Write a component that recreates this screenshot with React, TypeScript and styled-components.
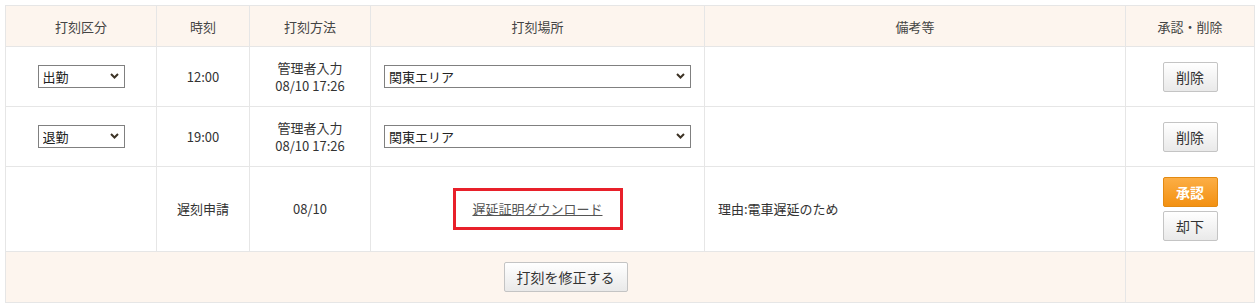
import React from "react"
import styled, { createGlobalStyle } from "styled-components"

const GlobalStyle = createGlobalStyle`
  body {
    margin: 0;
    background: #fff;
    font-family: "Noto Sans CJK JP", "Noto Sans", sans-serif;
    color: #333;
  }
`

type Punch = {
  kind: string
  time: string
  method: string[]
  place: string
}

const punches: Punch[] = [
  { kind: "出勤", time: "12:00", method: ["管理者入力", "08/10 17:26"], place: "関東エリア" },
  { kind: "退勤", time: "19:00", method: ["管理者入力", "08/10 17:26"], place: "関東エリア" },
]

const Chevron: React.FC = () => (
  <S.Chevron width="9" height="6" viewBox="0 0 9 6">
    <path d="M1 1 L4.5 4.5 L8 1" fill="none" stroke="#3d3326" strokeWidth="2" />
  </S.Chevron>
)

const Select: React.FC<{ value: string; width: number }> = ({ value, width }) => (
  <S.SelectWrap $width={width}>
    <S.Select defaultValue={value}>
      <option>{value}</option>
    </S.Select>
    <Chevron />
  </S.SelectWrap>
)

export default function App() {
  return (
    <>
      <GlobalStyle />
      <S.Page>
        <S.Table>
          <colgroup>
            <col style={{ width: 151 }} />
            <col style={{ width: 93 }} />
            <col style={{ width: 121 }} />
            <col style={{ width: 334 }} />
            <col style={{ width: 421 }} />
            <col style={{ width: 129 }} />
          </colgroup>
          <thead>
            <tr>
              <S.Th>打刻区分</S.Th>
              <S.Th>時刻</S.Th>
              <S.Th>打刻方法</S.Th>
              <S.Th>打刻場所</S.Th>
              <S.Th>備考等</S.Th>
              <S.Th>承認・削除</S.Th>
            </tr>
          </thead>
          <tbody>
            {punches.map((p, i) => (
              <S.Row key={i} $height={60}>
                <S.Td>
                  <Select value={p.kind} width={87} />
                </S.Td>
                <S.Td>{p.time}</S.Td>
                <S.Td>
                  {p.method.map((line, j) => (
                    <div key={j}>{line}</div>
                  ))}
                </S.Td>
                <S.Td $align="left">
                  <Select value={p.place} width={307} />
                </S.Td>
                <S.Td />
                <S.Td>
                  <S.Button>削除</S.Button>
                </S.Td>
              </S.Row>
            ))}
            <S.Row $height={85}>
              <S.Td />
              <S.Td>遅刻申請</S.Td>
              <S.Td>08/10</S.Td>
              <S.Td>
                <S.Highlight>
                  <S.Link href="#">遅延証明ダウンロード</S.Link>
                </S.Highlight>
              </S.Td>
              <S.Td $align="left">理由:電車遅延のため</S.Td>
              <S.Td>
                <S.ButtonStack>
                  <S.Button $primary>承認</S.Button>
                  <S.Button>却下</S.Button>
                </S.ButtonStack>
              </S.Td>
            </S.Row>
            <S.Row $height={51}>
              <S.FooterTd colSpan={5}>
                <S.Button $wide>打刻を修正する</S.Button>
              </S.FooterTd>
              <S.FooterTd />
            </S.Row>
          </tbody>
        </S.Table>
      </S.Page>
    </>
  )
}

const S = {
  Page: styled.div`
    padding: 5px;
  `,
  Table: styled.table`
    border-collapse: collapse;
    table-layout: fixed;
    width: 1249px;
    font-size: 13px;
  `,
  Th: styled.th`
    height: 40px;
    padding: 0;
    background: #fdf5ee;
    border: 1px solid #e6e6e6;
    font-weight: normal;
    color: #444;
    text-align: center;
    vertical-align: middle;
  `,
  Row: styled.tr<{ $height: number }>`
    height: ${(p) => p.$height}px;
  `,
  Td: styled.td<{ $align?: "left" | "center" }>`
    padding: 0 0 0 ${(p) => (p.$align === "left" ? "13px" : "0")};
    border: 1px solid #e6e6e6;
    text-align: ${(p) => p.$align || "center"};
    vertical-align: middle;
    line-height: 18px;
    color: #333;
  `,
  FooterTd: styled.td`
    padding: 0;
    background: #fdf5ee;
    border: 1px solid #e6e6e6;
    text-align: center;
    vertical-align: middle;
  `,
  SelectWrap: styled.div<{ $width: number }>`
    position: relative;
    display: inline-block;
    width: ${(p) => p.$width}px;
    height: 23px;
    vertical-align: middle;
  `,
  Select: styled.select`
    appearance: none;
    width: 100%;
    height: 100%;
    margin: 0;
    padding: 0 20px 0 4px;
    border: 1px solid #808080;
    border-radius: 0;
    background: #fff;
    font-family: "Noto Sans CJK JP", sans-serif;
    font-size: 13px;
    color: #222;
    outline: none;
  `,
  Chevron: styled.svg`
    position: absolute;
    right: 6px;
    top: 8px;
    pointer-events: none;
  `,
  Button: styled.button<{ $primary?: boolean; $wide?: boolean }>`
    display: inline-block;
    width: ${(p) => (p.$wide ? "124px" : "55px")};
    height: 30px;
    margin: 0;
    padding: 0;
    border: 1px solid ${(p) => (p.$primary ? "#e38a12" : "#c4c4c4")};
    border-radius: 2px;
    background: ${(p) =>
      p.$primary
        ? "linear-gradient(#fcae45, #f39112)"
        : "linear-gradient(#ffffff, #e9e9e9)"};
    color: ${(p) => (p.$primary ? "#fff" : "#333")};
    font-family: "Noto Sans CJK JP", sans-serif;
    font-size: 14px;
    font-weight: ${(p) => (p.$primary ? "bold" : "normal")};
    vertical-align: middle;
    cursor: pointer;
  `,
  ButtonStack: styled.div`
    display: inline-flex;
    flex-direction: column;
    gap: 4px;
    vertical-align: middle;
  `,
  Highlight: styled.div`
    display: inline-flex;
    align-items: center;
    justify-content: center;
    width: 170px;
    height: 42px;
    box-sizing: border-box;
    border: 3px solid #e8202a;
    vertical-align: middle;
  `,
  Link: styled.a`
    color: #555;
    text-decoration: underline;
    font-size: 13px;
  `,
}
